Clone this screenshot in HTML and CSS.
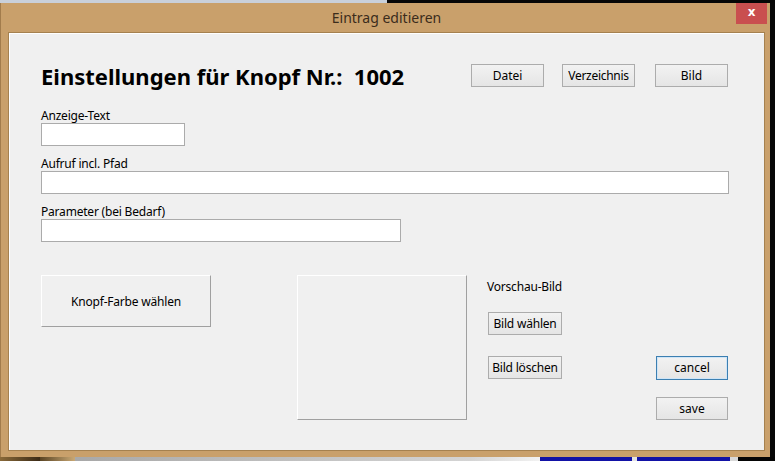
FILE: index.html
```html
<!DOCTYPE html>
<html lang="de">
<head>
<meta charset="utf-8">
<title>Eintrag editieren</title>
<link rel="stylesheet" href="styles.css">
</head>
<body>
<div class="screen">
  <div class="topstrip"><div class="ts-left"></div><div class="ts-right"></div></div>
  <div class="mid">
    <div class="window">
      <div class="titlebar">
        <span class="title">Eintrag editieren</span>
        <div class="close">x</div>
      </div>
      <div class="client">
        <div class="header">
          <h1 class="heading">Einstellungen für Knopf Nr.:&nbsp; 1002</h1>
          <div class="hbtns">
            <button class="btn">Datei</button>
            <button class="btn btn-verz">Verzeichnis</button>
            <button class="btn">Bild</button>
          </div>
        </div>
        <div class="field">
          <label class="lbl">Anzeige-Text</label>
          <input class="in in-short" type="text">
        </div>
        <div class="field">
          <label class="lbl">Aufruf incl. Pfad</label>
          <input class="in in-long" type="text">
        </div>
        <div class="field">
          <label class="lbl">Parameter (bei Bedarf)</label>
          <input class="in in-mid" type="text">
        </div>
        <div class="lower">
          <button class="flat knopf">Knopf-Farbe wählen</button>
          <div class="preview"></div>
          <div class="col-mid">
            <div class="vlabel">Vorschau-Bild</div>
            <button class="btn btn-sm">Bild wählen</button>
            <button class="btn btn-sm">Bild löschen</button>
          </div>
          <div class="col-right">
            <button class="btn btn-default">cancel</button>
            <button class="btn">save</button>
          </div>
        </div>
      </div>
    </div>
    <div class="rightedge"></div>
  </div>
  <div class="bottomstrip">
    <div class="bs bs-1"></div>
    <div class="bs bs-2"></div>
    <div class="bs bs-3"></div>
    <div class="bs bs-blue1"></div>
    <div class="bs bs-4"></div>
    <div class="bs bs-blue2"></div>
    <div class="bs bs-5"></div>
    <div class="bs bs-6"></div>
  </div>
</div>
</body>
</html>
```

FILE: styles.css
```css
* { box-sizing: border-box; }
html, body { margin: 0; padding: 0; }
body {
  width: 775px;
  height: 461px;
  overflow: hidden;
  background: #050505;
  font-family: "Noto Sans", "Open Sans", sans-serif;
  font-size: 12px;
  color: #000;
}
.screen { display: flex; flex-direction: column; width: 775px; height: 461px; }

.topstrip { display: flex; height: 3px; }
.ts-left { width: 387px; background: #c9d0da; }
.ts-right { flex: 1; background: #060606; }

.mid { display: flex; height: 454px; }
.window {
  width: 770px;
  height: 454px;
  background: #c9a06b;
  border-left: 1px solid #a27c4c;
  display: flex;
  flex-direction: column;
}
.rightedge { flex: 1; background: #070707; }

.titlebar {
  position: relative;
  height: 29px;
  display: flex;
  align-items: center;
  justify-content: center;
  padding-left: 2px;
}
.title {
  font-family: "Noto Sans", "Open Sans", sans-serif;
  font-size: 14px;
  color: #3b2c1c;
}
.close {
  position: absolute;
  right: 3px;
  top: 0;
  width: 31px;
  height: 21px;
  background: #c94f4f;
  color: #fff;
  font-family: "DejaVu Sans", sans-serif;
  font-weight: bold;
  font-size: 12px;
  line-height: 19px;
  text-align: center;
}

.client {
  margin-left: 7px;
  width: 757px;
  height: 419px;
  background: #f0f0f0;
  border: 1px solid #a5814f;
  box-shadow: inset 1px 1px 0 #ffffff;
  padding: 31px 0 0 32px;
  display: flex;
  flex-direction: column;
}

.header {
  display: flex;
  align-items: center;
  width: 687px;
  height: 23px;
}
.heading {
  margin: 0;
  font-family: "Noto Sans", "Open Sans", sans-serif;
  font-weight: bold;
  font-size: 22px;
  line-height: 23px;
  white-space: pre;
  padding-top: 1px;
}
.hbtns { margin-left: auto; display: flex; gap: 18px; }
.hbtns .btn:last-child { margin-left: 2px; }

.btn {
  width: 73px;
  height: 23px;
  padding: 0;
  border: 1px solid #acacac;
  background: linear-gradient(#f2f2f2, #e5e5e5);
  font-family: "Noto Sans", "Open Sans", sans-serif;
  font-size: 12px;
  color: #000;
  line-height: 20px;
}
.btn-verz { letter-spacing: -0.3px; }
.btn-sm { width: 74px; letter-spacing: -0.2px; }
.btn-default {
  border-color: #3c7fb1;
  box-shadow: inset 0 0 0 1px #cfe5f7;
  height: 24px;
}

.field { display: flex; flex-direction: column; margin-top: 7px; }
.header + .field { margin-top: 18px; }
.lbl {
  height: 18px;
  padding-top: 3px;
  line-height: 15px;
  font-size: 12px;
  letter-spacing: -0.2px;
}
.in {
  height: 23px;
  border: 1px solid #ababab;
  background: #fff;
  margin: 0;
  padding: 0 3px;
  font-family: inherit;
  font-size: 12px;
}
.in-short { width: 144px; }
.in-long { width: 688px; }
.in-mid { width: 360px; }

.lower { display: flex; align-items: flex-start; margin-top: 33px; }
.flat {
  background: #f0f0f0;
  border: 1px solid;
  border-color: #ffffff #a0a0a0 #a0a0a0 #ffffff;
}
.knopf {
  width: 170px;
  height: 52px;
  padding: 0;
  font-family: "Noto Sans", "Open Sans", sans-serif;
  font-size: 12px;
  letter-spacing: -0.2px;
  color: #000;
}
.preview {
  width: 170px;
  height: 145px;
  margin-left: 86px;
  background: #f0f0f0;
  border: 1px solid;
  border-color: #ffffff #a0a0a0 #a0a0a0 #ffffff;
}
.col-mid {
  margin-left: 21px;
  display: flex;
  flex-direction: column;
  align-items: flex-start;
  padding-top: 4px;
}
.vlabel { line-height: 16px; height: 16px; letter-spacing: -0.2px; margin-left: -1px; }
.col-mid .btn:nth-of-type(1) { margin-top: 17px; }
.col-mid .btn:nth-of-type(2) { margin-top: 21px; }
.col-right {
  margin-left: 94px;
  display: flex;
  flex-direction: column;
  padding-top: 81px;
  gap: 17px;
}
.col-right .btn { width: 72px; }

.bottomstrip { display: flex; height: 4px; }
.bs { height: 4px; }
.bs-1 { width: 40px; background: linear-gradient(90deg, #8a6a3a, #3a2a16); }
.bs-2 { width: 35px; background: linear-gradient(90deg, #5a4424, #c9a874); }
.bs-3 { width: 465px; background: linear-gradient(90deg, #a8a8a8, #d4d4d4 85%, #f2f2f2); }
.bs-blue1 { width: 92px; background: #1212a6; }
.bs-4 { width: 5px; background: #e2e2e2; }
.bs-blue2 { width: 93px; background: #1212a6; }
.bs-5 { width: 8px; background: #d8d8d8; }
.bs-6 { flex: 1; background: #050505; }
```
